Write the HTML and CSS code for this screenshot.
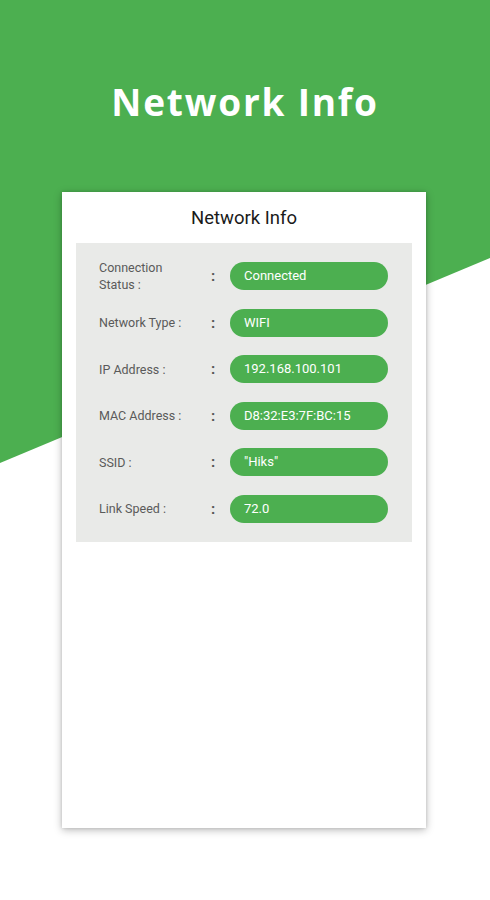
FILE: index.html
```html
<!DOCTYPE html>
<html lang="en">
<head>
<meta charset="utf-8">
<title>Network Info</title>
<link rel="stylesheet" href="styles.css">
</head>
<body>
<div class="page">
  <h1 class="hero-title">Network Info</h1>
  <section class="card">
    <h2 class="card-title">Network Info</h2>
    <div class="panel">
      <div class="row">
        <span class="label">Connection Status :</span>
        <span class="colon">:</span>
        <span class="pill">Connected</span>
      </div>
      <div class="row">
        <span class="label">Network Type :</span>
        <span class="colon">:</span>
        <span class="pill">WIFI</span>
      </div>
      <div class="row">
        <span class="label">IP Address :</span>
        <span class="colon">:</span>
        <span class="pill">192.168.100.101</span>
      </div>
      <div class="row">
        <span class="label">MAC Address :</span>
        <span class="colon">:</span>
        <span class="pill">D8:32:E3:7F:BC:15</span>
      </div>
      <div class="row">
        <span class="label">SSID :</span>
        <span class="colon">:</span>
        <span class="pill">"Hiks"</span>
      </div>
      <div class="row">
        <span class="label">Link Speed :</span>
        <span class="colon">:</span>
        <span class="pill">72.0</span>
      </div>
    </div>
  </section>
</div>
</body>
</html>
```
FILE: styles.css
```css
html, body {
  margin: 0;
  padding: 0;
  background: #ffffff;
}

body {
  font-family: Roboto, "Liberation Sans", sans-serif;
}

.page {
  position: relative;
  width: 490px;
  height: 900px;
  overflow: hidden;
  display: flex;
  flex-direction: column;
  align-items: center;
  box-sizing: border-box;
  padding-top: 77px;
  isolation: isolate;
}

.page::before {
  content: "";
  position: absolute;
  inset: 0;
  background: #4caf50;
  clip-path: polygon(0 0, 490px 0, 490px 258px, 0 463px);
  z-index: -1;
}

.hero-title {
  margin: 0;
  font-family: "Open Sans", sans-serif;
  font-weight: 700;
  font-size: 37px;
  line-height: 50px;
  color: #ffffff;
  letter-spacing: 1.8px;
}

.card {
  margin-top: 65px;
  margin-right: 2px;
  width: 364px;
  height: 636px;
  background: #ffffff;
  box-shadow: 0 2px 8px rgba(0, 0, 0, 0.28), 0 0 3px rgba(0, 0, 0, 0.12);
  box-sizing: border-box;
  padding: 14px 14px 0;
  display: flex;
  flex-direction: column;
}

.card-title {
  margin: 0;
  text-align: center;
  font-weight: 400;
  font-size: 18.5px;
  line-height: 24px;
  color: #1a1a1a;
}

.panel {
  margin-top: 13px;
  background: #e9eae8;
  padding: 19px 24px 19px 23px;
  display: flex;
  flex-direction: column;
  gap: 18.6px;
}

.row {
  display: grid;
  grid-template-columns: 112px 19px 1fr;
  grid-template-rows: 28px;
  align-items: center;
  height: 28px;
}

.label {
  max-width: 90px;
  font-size: 12.5px;
  line-height: 17px;
  color: #5a5a5a;
}

.colon {
  font-size: 15px;
  font-weight: 700;
  color: #555;
}

.pill {
  height: 28px;
  border-radius: 14px;
  background: #4caf50;
  color: #ffffff;
  font-size: 13px;
  line-height: 28px;
  padding-left: 14px;
}
```
